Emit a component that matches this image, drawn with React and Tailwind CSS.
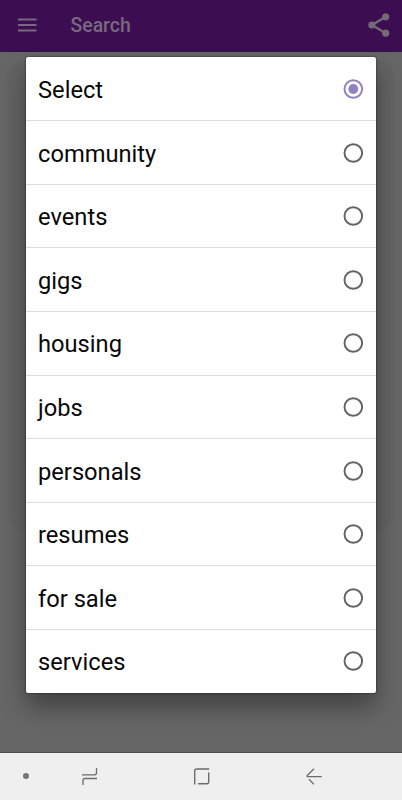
const options = [
  'Select',
  'community',
  'events',
  'gigs',
  'housing',
  'jobs',
  'personals',
  'resumes',
  'for sale',
  'services',
]

function Radio({ checked }) {
  return (
    <svg width="20" height="20" viewBox="0 0 20 20" fill="none" className={checked ? 'text-[#8e82c0]' : 'text-[#636363]'}>
      <circle cx="10.3" cy="10" r="8.8" stroke="currentColor" strokeWidth="1.9" />
      {checked && <circle cx="10.3" cy="10" r="4.9" fill="currentColor" />}
    </svg>
  )
}

function TopBar() {
  return (
    <header className="flex h-[52px] shrink-0 items-center bg-[#3d0d52] pr-3 pl-[18px] text-[#79697f]">
      <svg width="19" height="14" viewBox="0 0 19 14" stroke="currentColor" strokeWidth="1.8" className="mt-[-3px]">
        <path d="M0 1.5h18.5M0 7h18.5M0 12.5h18.5" />
      </svg>
      <h1 className="ml-[33.5px] text-[19.4px] leading-6 font-medium">Search</h1>
      <svg width="22" height="24" viewBox="0 0 22 24" className="mt-[-3px] ml-auto text-[#726a75]">
        <path d="M17.7 3.8 4 12l13.7 8.2" fill="none" stroke="currentColor" strokeWidth="2.3" />
        <g fill="currentColor">
          <circle cx="17.7" cy="3.8" r="3.6" />
          <circle cx="3.9" cy="12" r="3.6" />
          <circle cx="17.7" cy="20.2" r="3.6" />
        </g>
      </svg>
    </header>
  )
}

function NavBar() {
  return (
    <nav className="flex h-[47px] shrink-0 items-center bg-[#efefef] text-[#6c6c6c]">
      <span className="mt-[-1px] ml-[23px] h-[6px] w-[6px] rounded-full bg-[#747474]" />
      <svg width="17" height="18" viewBox="0 0 17 18" fill="none" stroke="currentColor" strokeWidth="1.3" className="mt-[-1px] ml-[52px]">
        <path d="M1 7.8h12.5q2 0 2-2V1M16 11.5H4q-2 0-2 2V18" />
      </svg>
      <svg width="17" height="17" viewBox="0 0 17 17" fill="none" stroke="currentColor" strokeWidth="1.4" className="mt-[-1px] ml-[95px]">
        <path d="M1.7 16.5V3q0-2 2-2h12.5M5 15.8h8.7q2 0 2-2V4.5" />
      </svg>
      <svg width="17" height="17" viewBox="0 0 17 17" fill="none" stroke="currentColor" strokeWidth="1.3" className="mt-[-1px] ml-[95px]">
        <path d="M9 .8 2.2 7.6v1h14.6M4 11.2l5 5.2" />
      </svg>
    </nav>
  )
}

export default function App() {
  return (
    <div className="relative flex h-[800px] w-[402px] flex-col overflow-hidden bg-[#666666] font-['Roboto',sans-serif]">
      <TopBar />
      <main className="flex-1 border-b border-[#4c4c4c] px-2 pt-[7px]">
        <div className="h-[473px] rounded-[20px] bg-[#636363]" />
      </main>
      <NavBar />

      {/* Category picker */}
      <div
        role="radiogroup"
        className="absolute top-[56.7px] left-[26px] w-[350px] rounded-[2px] bg-white shadow-[0_0_2px_rgba(0,0,0,0.75),0_14px_24px_rgba(0,0,0,0.36)]"
      >
        {options.map((option, i) => (
          <div
            key={option}
            role="radio"
            aria-checked={i === 0}
            className="flex h-[63.6px] items-center justify-between border-t border-[#dcdcdc] pr-[13px] pl-3 first:border-transparent"
          >
            <span className="mt-[3.8px] text-[23.7px] text-[#080808]">{option}</span>
            <Radio checked={i === 0} />
          </div>
        ))}
      </div>
    </div>
  )
}
